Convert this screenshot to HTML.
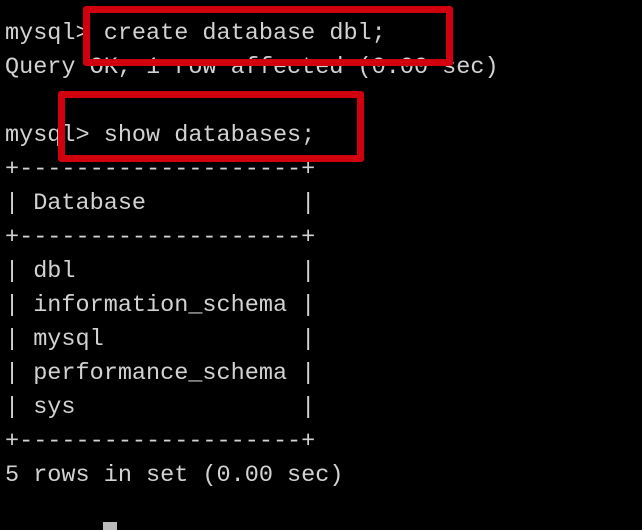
<!DOCTYPE html><html><head><style>
html,body{margin:0;padding:0;background:#000;width:642px;height:530px;overflow:hidden;position:relative}
pre{margin:0;position:absolute;left:5px;top:17px;font-family:"Liberation Mono",monospace;font-size:23.5px;line-height:34px;color:#d2d2d2}
.b{position:absolute;border:7px solid #d0000f;border-radius:3px;box-sizing:border-box}
.c{position:absolute;left:103px;top:522px;width:14px;height:10px;background:#bbb}
</style></head><body>
<pre>mysql&gt; create database dbl;
Query OK, 1 row affected (0.00 sec)

mysql&gt; show databases;
+--------------------+
| Database           |
+--------------------+
| dbl                |
| information_schema |
| mysql              |
| performance_schema |
| sys                |
+--------------------+
5 rows in set (0.00 sec)</pre>
<div class="b" style="left:83px;top:6px;width:370px;height:60px"></div>
<div class="b" style="left:58px;top:91px;width:306px;height:71px"></div>
<div class="c"></div>
</body></html>
